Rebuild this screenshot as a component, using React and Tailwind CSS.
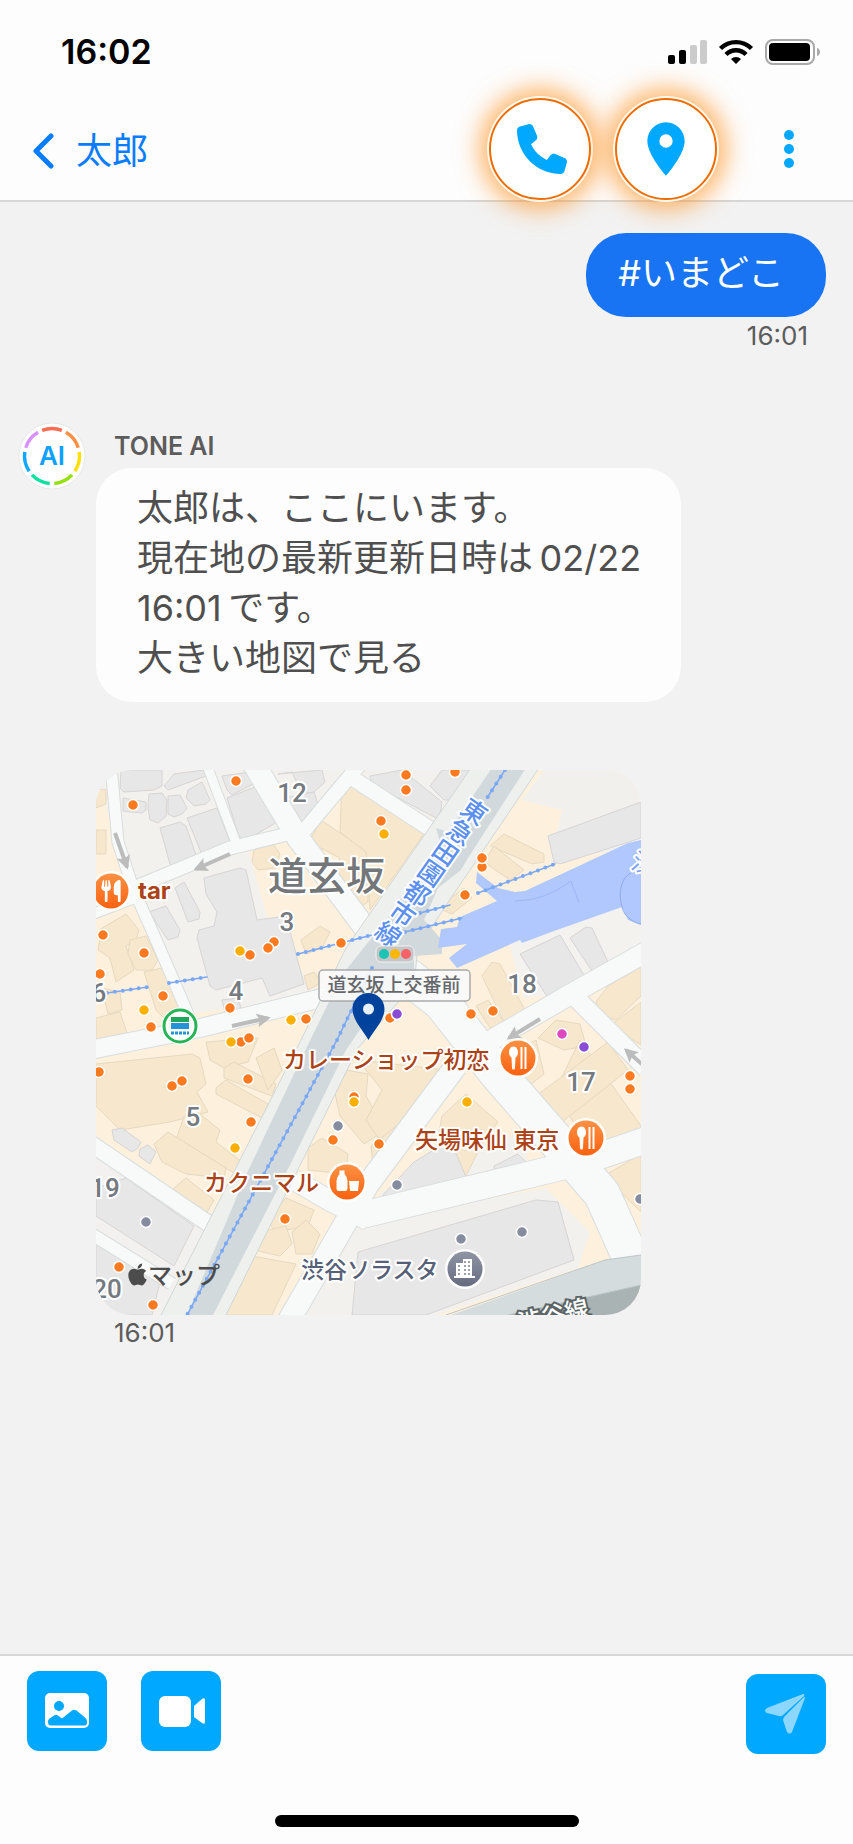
// App.jsx
// Chat screen: a location request and the AI assistant's reply with a map.

import { FaApple, FaPhone, FaUtensils } from "react-icons/fa6";
import { MdPlace } from "react-icons/md";

const AVATAR_COLORS = ["#ff6b4f", "#ff8f45", "#ffdf0a", "#94e010", "#10e0a0", "#12a8ff", "#d891ff"];

// Plain ground under the streets
const GROUNDS = [
  ["#f3f1ed", "0,0 262,0 205,72 150,72 175,160 224,226 92,244 44,118 20,72"],
  ["#f3f1ed", "270,0 372,0 335,62 264,12"],
  ["#f2f0ed", "448,0 545,0 545,76 454,92 466,40 426,30"],
  ["#f3f2ef", "412,170 545,120 545,184 478,222 428,228"],
  ["#f3f1ef", "0,384 112,460 72,545 0,545"],
  ["#f3f1ed", "283,424 350,385 432,362 430,402 300,442"],
  ["#f3f1ed", "206,545 256,454 450,418 494,462 482,498 340,545"],
];

const GREY_BLOCKS = [
  "25,0 66,0 66,16 58,20 28,22 24,18",
  "68,16 78,4 108,0 110,6 72,20",
  "27,28 50,32 50,40 46,43 27,41",
  "53,24 66,23 71,30 70,46 62,53 54,50 52,38",
  "72,26 84,25 91,38 86,44 78,47 72,44",
  "92,20 106,12 114,30 110,34 98,36 90,28",
  "91,48 121,38 135,74 130,77 106,85",
  "64,58 84,52 90,56 101,88 79,97 74,94",
  "126,6 155,2 157,14 136,25 131,20",
  "131,28 166,14 182,48 178,54 148,71 142,64",
  "182,4 226,0 229,12 216,24 204,20 196,2",
  "190,28 218,22 222,34 206,56 201,54",
  "79,118 88,112 104,142 103,149 92,152",
  "53,142 70,136 84,160 82,167 72,170",
  "108,108 144,98 150,100 161,150 190,146 208,214 174,226 166,208 120,220 114,216 101,168 103,160 118,156 121,142 110,124",
  "126,230 142,228 146,242 130,246",
  "274,6 306,0 346,32 344,44 340,48 276,14",
  "334,16 346,0 374,0 356,30 348,30",
  "452,66 545,32 545,68 464,94 458,92",
  "424,184 464,165 498,222 452,228",
  "474,168 490,157 496,158 512,192 496,201",
  "16,360 26,358 45,372 42,378 36,382 18,370",
  "44,379 52,375 60,382 54,394 43,386",
  "0,418 30,408 98,456 78,496 0,446",
  "0,472 64,512 56,545 0,545",
  "286,426 318,392 354,370 374,416 294,442 282,434",
  "398,396 422,384 432,394 428,406 400,408",
  "256,545 262,482 440,430 462,432 478,490 330,545",
];

const TAN_BLOCKS = [
  "0,18 10,20 10,34 0,38",
  "0,60 10,60 10,84 0,84",
  "158,80 174,70 184,84 180,98 162,100 156,92",
  "213,72 225,50 272,82 272,132 260,140 236,112 244,88",
  "246,14 268,18 328,64 274,140 270,82 244,62",
  "205,170 224,156 234,162 226,178 210,184",
  "6,158 30,144 43,160 40,170 30,176 38,200 20,212 14,188 2,180",
  "34,170 50,166 62,190 56,200 40,200 32,184",
  "48,202 66,198 86,236 74,254 60,240",
  "0,248 24,242 34,272 0,278",
  "6,218 24,222 26,240 12,244",
  "208,206 218,202 226,212 212,220",
  "394,76 408,64 448,84 448,92 436,94",
  "388,92 398,76 428,100 414,110",
  "342,138 368,118 376,128 356,144",
  "386,206 396,192 404,194 428,238 424,250 408,252",
  "380,236 392,230 408,252 404,262 394,258",
  "500,232 512,216 545,196 545,226 520,250 504,244",
  "514,256 545,232 545,275",
  "442,268 460,250 484,254 490,276 468,280",
  "0,294 96,284 104,288 110,314 101,322 112,342 74,352 24,360 0,336",
  "110,272 162,268 152,292 128,298 114,290",
  "128,298 138,292 180,314 176,326 128,308",
  "120,318 130,310 172,334 166,348 120,324",
  "88,346 104,344 124,360 120,372 146,392 140,404 80,370",
  "58,374 72,362 130,398 128,408 90,404 66,392",
  "78,418 90,408 118,430 110,444 78,430",
  "160,288 178,278 186,300 172,320",
  "236,310 250,300 272,304 270,326 290,360 268,374 244,346",
  "212,378 226,368 252,384 250,404 212,400",
  "262,290 350,300 290,380 270,350 286,320",
  "275,376 300,356 306,378 278,404",
  "346,346 370,324 402,352 388,370 368,410 342,368",
  "170,450 190,428 218,440 212,456 180,462",
  "164,462 190,456 196,474 184,486 158,480",
  "196,462 210,450 224,464 216,484 200,484",
  "156,486 200,494 176,545 130,545",
  "402,290 440,270 448,304 430,318",
  "444,352 484,270 545,356 545,362 500,390 470,340",
  "440,326 512,272 532,300 466,352 452,340",
  "508,406 545,384 545,442",
];

// [points, width]
const STREETS = [
  ["15,-4 22,72 37,118 61,172 92,244", 11],
  ["112,-2 142,78", 9],
  ["40,117 134,78 200,62", 13],
  ["158,-6 202,68 272,162", 22],
  ["207,62 254,6 264,-6", 14],
  ["250,4 345,66", 15],
  ["-6,145 44,126", 10],
  ["-6,280 104,258 234,226", 18],
  ["310,205 345,232 402,304 456,366 506,424 540,500", 36],
  ["370,285 475,224 550,182", 20],
  ["478,226 550,298", 18],
  ["360,296 272,414 192,552", 22],
  ["262,446 436,404 486,392 550,370", 26],
  ["198,410 236,432 272,450", 20],
  ["-6,373 122,460", 16],
  ["-6,463 76,514", 12],
];

const RAILS = [
  "276,198 241,270 91,545",
  "409,0 391,28",
  "11,223 52,217",
  "73,213 111,207",
  "202,184 280,164",
  "309,162 366,148",
  "324,143 354,135",
  "382,123 459,94",
];

const ARROWS = [
  [19, 63, 31, 97],
  [134, 84, 100, 99],
  [136, 256, 172, 248],
  [444, 249, 413, 268],
  [549, 297, 530, 280],
];

const DOTS = {
  "#ff7a1f": [
    [37, 35], [140, 11], [7, 165], [48, 183], [4, 204], [67, 226], [55, 257], [134, 238], [154, 185],
    [178, 172], [172, 178], [210, 249], [245, 173], [145, 272], [153, 268], [310, 5], [310, 20], [359, 2],
    [285, 51], [386, 97], [386, 88], [369, 125], [375, 244], [397, 241], [294, 248], [3, 302], [76, 316],
    [86, 311], [152, 309], [155, 352], [237, 370], [189, 449], [23, 497], [57, 535], [258, 327],
    [283, 374], [534, 306], [534, 319],
  ],
  "#fbb000": [[144, 181], [48, 240], [195, 250], [135, 272], [288, 64], [139, 378], [258, 332], [371, 332]],
  "#8a4bd6": [[301, 244], [488, 277]],
  "#dc48be": [[466, 264]],
  "#858ca0": [[242, 356], [50, 452], [301, 415], [365, 469], [426, 462], [544, 429]],
};

const BLOCK_NUMBERS = [
  ["12", 196, 23], ["3", 191, 152], ["4", 140, 221], ["6", 3, 223], ["18", 426, 214],
  ["17", 485, 312], ["5", 97, 347], ["19", 9, 418], ["20", 11, 519],
];

const PLACES = [
  ["カレーショップ初恋", 187, 289, "#ac4216"],
  ["矢場味仙 東京", 319, 369, "#ac4216"],
  ["カクニマル", 108, 412, "#ac4216"],
  ["渋谷ソラスタ", 205, 499, "#566078"],
];

function StatusBar() {
  return (
    <div className="flex h-[98px] items-center justify-between pr-[33px] pl-[61px] pt-[6px]">
      <span className="text-[34px] leading-10 font-semibold text-black">16:02</span>
      <svg viewBox="0 0 152 26" className="h-[26px] w-[152px]" aria-hidden="true">
        <rect x="0" y="16" width="7" height="9" rx="2" />
        <rect x="11" y="11" width="7" height="14" rx="2" />
        <rect x="22" y="6" width="7" height="19" rx="2" fill="#cbcbcb" />
        <rect x="32" y="1" width="7" height="24" rx="2" fill="#cbcbcb" />
        <g fill="none" stroke="#000" strokeWidth="4.400">
          <path d="M52.500 9.500a22 22 0 0 1 31 0" />
          <path d="M58 15.500a14 14 0 0 1 20 0" />
        </g>
        <path d="M68 25l-5-5a7.500 7.500 0 0 1 10 0z" />
        <rect x="98" y="1" width="48" height="24" rx="7" fill="none" stroke="#a9a9a9" strokeWidth="2" />
        <rect x="101" y="4" width="41" height="18" rx="4" />
        <path d="M149 9c4 1 4 7 0 8z" fill="#a9a9a9" />
      </svg>
    </div>
  );
}

function RoundButton({ label, children }) {
  return (
    <button
      type="button"
      aria-label={label}
      className="grid size-[102px] place-items-center rounded-full border-2 border-[#ee6c00] bg-white text-[#00a8ff] shadow-[0_0_0_2px_#fff8ef,0_0_24px_9px_rgba(255,140,20,0.65)]"
    >
      {children}
    </button>
  );
}

function ChatHeader() {
  return (
    <header className="relative z-10 border-b-2 border-[#d6d6d6] bg-[#fdfdfd]">
      <StatusBar />
      <nav className="flex h-[102px] items-center pr-11 pl-8">
        <a href="#chats" className="flex items-center gap-[22px] pt-1 text-[36px] leading-none text-[#0a7cff]">
          <svg viewBox="0 0 22 36" className="h-9 w-[22px]" aria-hidden="true">
            <path d="M19 3 4 18l15 15" fill="none" stroke="currentColor" strokeWidth="5" strokeLinecap="round" strokeLinejoin="round" />
          </svg>
          <span>太郎</span>
        </a>
        <div className="ml-auto flex gap-6">
          <RoundButton label="電話">
            <FaPhone size={50} className="ml-1" />
          </RoundButton>
          <RoundButton label="現在地">
            <MdPlace size={64} />
          </RoundButton>
        </div>
        <button type="button" aria-label="メニュー" className="ml-[52px] grid h-12 w-10 place-items-center text-[#00a8ff]">
          <svg viewBox="0 0 10 38" className="h-[38px] w-[10px]" fill="currentColor" aria-hidden="true">
            <circle cx="5" cy="5" r="5" />
            <circle cx="5" cy="19" r="5" />
            <circle cx="5" cy="33" r="5" />
          </svg>
        </button>
      </nav>
    </header>
  );
}

function Avatar() {
  return (
    <svg viewBox="0 0 68 68" className="size-[68px] shrink-0" role="img" aria-label="TONE AI">
      <circle cx="34" cy="34" r="33" fill="#fff" stroke="#e8e8e8" strokeWidth="1" />
      {AVATAR_COLORS.map((color, i) => (
        <circle
          key={color}
          cx="34"
          cy="34"
          r="27.500"
          fill="none"
          stroke={color}
          strokeWidth="3.500"
          pathLength="360"
          strokeDasharray="42 318"
          transform={`rotate(${-111 + (i * 360) / 7} 34 34)`}
        />
      ))}
      <text x="34" y="43" textAnchor="middle" fontSize="26" fontWeight="600" fill="#10a0ff">
        AI
      </text>
    </svg>
  );
}

function PlaceBadge({ x, y, color, children }) {
  return (
    <g transform={`translate(${x} ${y})`}>
      <circle r="20" fill="#fff" opacity="0.9" />
      <circle r="17.500" fill={color} />
      {children}
    </g>
  );
}

function SpoonBadge({ x, y }) {
  return (
    <PlaceBadge x={x} y={y} color="url(#food)">
      <path d="M-4.500-11.500c3 0 4.500 3 4.500 6 0 2.500-1 4-2.500 5L-3 10a1.500 1.500 0 0 1-3 0l-.500-10.500C-8-1.500-9-3-9-5.500c0-3 1.500-6 4.500-6z" fill="#fff" />
      <path d="M3.500-11v22M7.500-11v22" stroke="#fff" strokeWidth="2" />
    </PlaceBadge>
  );
}

function LocationMap() {
  return (
    <svg viewBox="0 0 545 545" className="block w-full" role="img" aria-label="道玄坂の地図">
      <defs>
        <marker id="arrow" viewBox="0 0 10 10" refX="8" refY="5" markerWidth="14" markerHeight="14" markerUnits="userSpaceOnUse" orient="auto">
          <path d="M0 0 10 5 0 10 2 5z" fill="#bcbcbc" />
        </marker>
        <linearGradient id="food" x1="0" y1="0" x2="0" y2="1">
          <stop offset="0" stopColor="#fc9143" />
          <stop offset="1" stopColor="#fb6210" />
        </linearGradient>
        <linearGradient id="office" x1="0" y1="0" x2="0" y2="1">
          <stop offset="0" stopColor="#8f95a3" />
          <stop offset="1" stopColor="#666c80" />
        </linearGradient>
      </defs>
      <rect width="545" height="545" fill="#fdf1de" />
      {GROUNDS.map(([fill, points]) => (
        <polygon key={points} points={points} fill={fill} />
      ))}
      <g fill="#f6e7cd" stroke="#e6d9c0" strokeWidth="1" strokeLinejoin="round">
        {TAN_BLOCKS.map((points) => (
          <polygon key={points} points={points} />
        ))}
      </g>
      <g fill="#e8e7e8" stroke="#d6d4d4" strokeWidth="1" strokeLinejoin="round">
        {GREY_BLOCKS.map((points) => (
          <polygon key={points} points={points} />
        ))}
      </g>

      {/* streets: outlines first so the junctions stay open */}
      <g fill="none" stroke="#d9dddd" strokeLinejoin="round">
        {STREETS.map(([points, width]) => (
          <polyline key={points} points={points} strokeWidth={width + 2} />
        ))}
      </g>
      <g fill="none" stroke="#f8f9f9" strokeLinejoin="round">
        {STREETS.map(([points, width]) => (
          <polyline key={points} points={points} strokeWidth={width} />
        ))}
      </g>

      {/* highway */}
      <polygon points="375,-2 443,-2 355,128 322,178 318,214 262,278 129,547 64,547 205,270 250,178" fill="#edf0ed" stroke="#cfd7d8" />
      <polygon points="396,-2 430,-2 372,88 365,100 342,118 328,150 346,170 346,184 318,186 318,214 290,222 250,280 194,395 116,547 90,547 150,405 207,285 246,205 290,150 344,72 340,58 352,62" fill="#d2d9dc" />
      <polygon points="509,490 545,485 545,545 355,545" fill="#d4dcde" />
      <polygon points="412,545 545,515 545,545" fill="#a9b3b4" />
      <path d="M350 545 509 490 545 485M412 545 545 515" fill="none" stroke="#bcc6c8" />

      <polygon
        points="381,102 402,118 419,122 429,121 532,73 545,70 545,155 532,150 526,137 458,161 426,173 424,170 361,198 353,188 371,174 342,178 345,159 361,157 364,147 401,131 380,113"
        fill="#b0c8fe"
      />
      <path d="M545 102c-20-4-26 24-16 42q6 8 16 10" fill="none" stroke="#8fa9ea" />
      <path d="M419 131q30 0 56-20M475 111l8 22" fill="none" stroke="#9db7f5" strokeWidth="1" />

      <g fill="none" stroke="#7ba8f5" strokeLinecap="round">
        {RAILS.map((points) => (
          <g key={points}>
            <polyline points={points} strokeWidth="1.500" />
            <polyline points={points} strokeWidth="4" strokeDasharray="0 8" />
          </g>
        ))}
      </g>
      {ARROWS.map(([x1, y1, x2, y2]) => (
        <line key={`${x1}-${y1}`} x1={x1} y1={y1} x2={x2} y2={y2} stroke="#bcbcbc" strokeWidth="4" markerEnd="url(#arrow)" />
      ))}

      {Object.entries(DOTS).map(([color, spots]) =>
        spots.map(([x, y]) => (
          <circle key={`${x}-${y}`} cx={x} cy={y} r="5.500" fill={color} stroke="#fff" strokeWidth="1.500" />
        ))
      )}

      {/* labels with a light halo */}
      <g stroke="#fff" strokeWidth="4" strokeLinejoin="round" style={{ paintOrder: "stroke" }}>
        <g fontFamily="Roboto" fontSize="26" fontWeight="500" fill="#747a80" textAnchor="middle">
          {BLOCK_NUMBERS.map(([text, x, y]) => (
            <text key={text} x={x} y={y + 9}>
              {text}
            </text>
          ))}
        </g>
        <text x="172" y="120" fontSize="39" fontWeight="500" fill="#747779">
          道玄坂
        </text>
        <g transform="translate(384 30) rotate(35)">
          <text fontSize="25" fontWeight="500" fill="#5b8ff0" style={{ writingMode: "vertical-rl" }}>
            東急田園都市線
          </text>
        </g>
        <text x="534" y="98" fontSize="24" fill="#7c9ff0" transform="rotate(20 534 98)">
          渋
        </text>
        <text x="42" y="129" fontSize="24" fontWeight="700" fill="#ac4216">
          tar
        </text>
        <g fontSize="23" fontWeight="500">
          {PLACES.map(([text, x, y, fill]) => (
            <text key={text} x={x} y={y + 9} fill={fill}>
              {text}
            </text>
          ))}
        </g>
      </g>
      <text x="424" y="562" transform="rotate(-13 424 562)" fontSize="24" fontWeight="500" fill="#fff" stroke="#5c6466" strokeWidth="4" style={{ paintOrder: "stroke" }}>
        渋谷線
      </text>

      <PlaceBadge x={15} y={121} color="url(#food)">
        <FaUtensils x="-11" y="-11" size={22} color="#fff" />
      </PlaceBadge>
      <SpoonBadge x={422} y={288} />
      <SpoonBadge x={490} y={368} />
      <PlaceBadge x={251} y={412} color="url(#food)">
        <path d="M-7.500-11.500h5v3.500q3 3 3 7v7q0 3-2 3h-7q-2 0-2-3v-7q0-4 3-7zM2-1h10L11 9H3z" fill="#fff" />
      </PlaceBadge>
      <PlaceBadge x={369} y={499} color="url(#office)">
        <path d="M-9-6h7v-4h9V7h3v2h-21V7h2z" fill="#fff" />
        <path d="M-6-4V6M0-8V6M4-8V6" stroke="#7c8294" strokeWidth="1.500" strokeDasharray="2 2" />
      </PlaceBadge>
      <g transform="translate(84 256)">
        <circle r="18.500" fill="#fff" />
        <circle r="16" fill="#fff" stroke="#25b556" strokeWidth="3" />
        <path d="M-9-9H9v5H-9z" fill="#1ea65a" />
        <path d="M-9-3H9v6H-9z" fill="#2493d8" />
        <path d="M-9 7H9" stroke="#2493d8" strokeWidth="3" strokeDasharray="3 1" />
      </g>

      <rect x="280" y="176" width="38" height="16" rx="5" fill="#c4c6c8" stroke="#f1f1f1" />
      <circle cx="288" cy="184" r="5" fill="#1bc4b4" />
      <circle cx="299" cy="184" r="5" fill="#fbb708" />
      <circle cx="310" cy="184" r="5" fill="#f7626a" />
      <rect x="223" y="200" width="151" height="31" rx="4" fill="#fafafa" fillOpacity="0.9" stroke="#a8aaac" strokeWidth="1.500" />
      <text x="298" y="222" fontSize="19" fontWeight="500" fill="#65686b" textAnchor="middle">
        道玄坂上交番前
      </text>
      <path d="M272.500 223c-9 0-16 7-16 16 0 11 11 22 16 31 5-9 16-20 16-31 0-9-7-16-16-16z" fill="#00429c" />
      <circle cx="272.500" cy="239" r="5.500" fill="#e6eef8" />

      <FaApple x="29" y="492" size={25} color="#4c4c4c" />
      <text x="52" y="514" fontSize="24" fontWeight="500" fill="#4c4c4c">
        マップ
      </text>
    </svg>
  );
}

function ToolButton({ label, children }) {
  return (
    <button type="button" aria-label={label} className="size-20 rounded-xl bg-[#00a8ff] text-white">
      <svg viewBox="0 0 80 80" className="size-20" fill="currentColor" aria-hidden="true">
        {children}
      </svg>
    </button>
  );
}

function Composer() {
  return (
    <footer className="flex h-[190px] flex-col justify-between border-t-2 border-[#d6d6d6] bg-[#fdfdfd] pt-[15px] pb-[17px]">
      <div className="flex items-start px-[27px]">
        <div className="flex gap-[34px]">
          <ToolButton label="写真">
            <rect x="18" y="22" width="44" height="35" rx="5" />
            <g fill="#00a8ff">
              <circle cx="32" cy="35" r="5" />
              <path d="M21 51q0-2 1-3l5-3.500q2-1.500 4 0l4 3 10-8q2-1.500 4.500 0l8.500 7q2 1.500 2 4v1q0 3-3 3H24q-3 0-3-3.500z" />
            </g>
          </ToolButton>
          <ToolButton label="ビデオ">
            <rect x="18" y="25" width="32" height="31" rx="6" />
            <path d="M53 35l8-7q3-2 3 1v22q0 3-3 1l-8-6z" />
          </ToolButton>
        </div>
        <div className="mt-[3px] ml-auto">
          <ToolButton label="送信">
            <g opacity="0.55">
              <path d="M57 20q2 0 1 2L37 41q-2 2-4 1l-12-3q-4-2 0-5z" />
              <path d="M57 24q2-2 2 0L46 58q-2 3-5 0l-4-12q0-2 2-4z" />
            </g>
          </ToolButton>
        </div>
      </div>
      <div className="mx-auto h-3 w-[304px] rounded-full bg-black" />
    </footer>
  );
}

export default function App() {
  return (
    <div className="flex min-h-screen flex-col bg-[#f2f2f2] font-[Inter,'Noto_Sans_CJK_JP',sans-serif]">
      <ChatHeader />
      <main className="flex-1 pt-[31px]">
        <section className="flex flex-col items-end pr-[27px]">
          <p className="rounded-[40px] bg-[#1874f2] pt-4 pr-[42px] pb-5 pl-8 text-[36px] leading-[48px] text-white">
            #いまどこ
          </p>
          <time className="pt-[3px] pr-[18px] text-[26px] leading-8 text-[#5c5c5c]">16:01</time>
        </section>

        <section className="flex items-start gap-[10px] pt-[70px] pr-4 pl-[18px]">
          <Avatar />
          <div className="min-w-0 flex-1">
            <h2 className="pt-2 pl-[18px] text-[25px] leading-8 font-semibold text-[#5c5c5c]">TONE AI</h2>
            <div className="mt-[6px] w-fit rounded-[36px] bg-[#fdfdfd] pt-[15px] pr-10 pb-[19px] pl-[41px] text-[36px] leading-[50px] text-[#4f4f4f]">
              <p>太郎は、ここにいます。</p>
              <p>
                現在地の最新更新日時は&thinsp;02/22
                <br />
                16:01&thinsp;です。
              </p>
              <a href="#map">大きい地図で見る</a>
            </div>
            <div className="mt-[68px] max-w-[545px] overflow-hidden rounded-[36px]">
              <LocationMap />
            </div>
            <time className="block pt-[2px] pl-[18px] text-[26px] leading-8 text-[#5c5c5c]">16:01</time>
          </div>
        </section>
      </main>
      <Composer />
    </div>
  );
}
